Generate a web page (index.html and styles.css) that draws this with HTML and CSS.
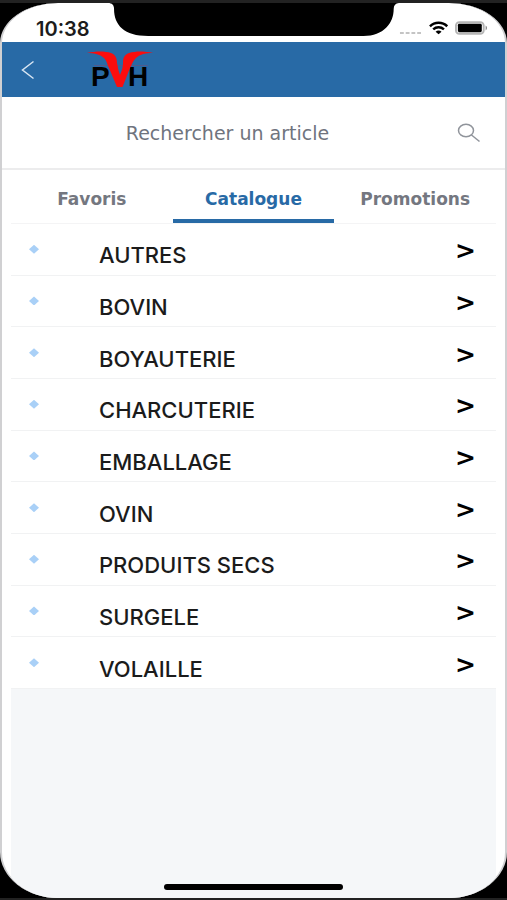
FILE: index.html
```html
<!DOCTYPE html>
<html lang="fr">
  <head>
    <meta charset="utf-8">
    <meta name="viewport" content="width=device-width, initial-scale=1">
    <title>Catalogue</title>
    <link rel="stylesheet" href="styles.css">
  </head>
  <body>
    <div class="screen">
      <!-- Status bar -->
      <div class="status-bar">
        <span class="time">10:38</span>
        <svg class="notch" viewBox="0 0 290 33" preserveAspectRatio="none" aria-hidden="true">
          <path d="M0 0C4 0 6 2 6 6C6 22 16 33 40 33H254C274 33 284 20 284 6C284 2 286 0 290 0Z"/>
        </svg>
        <div class="status-icons">
          <svg width="24" height="4" viewBox="0 0 24 4" aria-hidden="true">
            <path d="M1 2h4M7 2h4M13 2h4M19 2h4" stroke="#c4c4c4" stroke-width="2"/>
          </svg>
          <svg width="20" height="14" viewBox="0 0 20 14" fill="none" stroke="#000" stroke-width="2.6" aria-hidden="true">
            <path d="M1 5.2C6 .4 14 .4 19 5.2"/>
            <path d="M4.400 8.400C7.600 5.500 12.400 5.500 15.600 8.400"/>
            <path d="M10 13.400L6.900 10.900C8.700 9.300 11.300 9.300 13.100 10.900Z" fill="#000" stroke="none"/>
          </svg>
          <svg width="34" height="14" viewBox="0 0 34 14" aria-hidden="true">
            <rect x="1" y="1" width="29" height="12" rx="3.5" fill="#fff" stroke="#b5b5b5" stroke-width="2"/>
            <rect x="3" y="2.6" width="25" height="8.8" rx="1.5"/>
            <path d="M32 4.500C34 5.500 34 8.500 32 9.500Z" fill="#888"/>
          </svg>
        </div>
      </div>

      <!-- Header -->
      <header class="header">
        <button class="back-btn" type="button" aria-label="Retour">
          <svg width="14" height="20" viewBox="0 0 14 20" fill="none" stroke="#d7e5f2" stroke-width="1.5">
            <path d="M12.500 1.500L1.500 10L12.500 18.500"/>
          </svg>
        </button>
        <svg class="logo" width="70" height="54" viewBox="0 -7 70 54" role="img" aria-label="PVH">
          <path d="M8 15.500H62" stroke="#7b4a72" stroke-width="1" opacity=".5"/>
          <g class="logo-text">
            <text x="5" y="36">P</text>
            <text x="42" y="36">H</text>
          </g>
          <path fill="#fb0d0d" d="M1 3C10 1 19 1 25 3C30 5 31 9 31 13C32 17 32 20 34 25C36 20 37 17 37 13C37 8 38 5 43 3C50 1 58 1 67 3C60 3 54 4 50 8C46 12 46 15 44 18L36.500 37H31L23 18C21 14 21 11 18 8C14 4 7 3 1 3Z"/>
        </svg>
      </header>

      <!-- Search -->
      <form class="search">
        <input class="search-input" type="text" placeholder="Rechercher un article" aria-label="Rechercher un article">
        <button class="search-btn" type="submit" aria-label="Rechercher">
          <svg width="24" height="20" viewBox="0 0 24 20" fill="none" stroke="#90949b" stroke-width="1.5">
            <ellipse cx="9" cy="7.500" rx="7.500" ry="6.200"/>
            <path d="M14.500 12L22.500 18.500"/>
          </svg>
        </button>
      </form>

      <main class="content">
        <nav class="tabs">
          <a class="tab" href="#favoris">Favoris</a>
          <a class="tab active" href="#catalogue" aria-current="page">Catalogue</a>
          <a class="tab" href="#promotions">Promotions</a>
        </nav>

        <ul class="categories">
          <li><a class="category" href="#autres"><span class="dot"></span><span class="name">AUTRES</span><span class="arrow">&gt;</span></a></li>
          <li><a class="category" href="#bovin"><span class="dot"></span><span class="name">BOVIN</span><span class="arrow">&gt;</span></a></li>
          <li><a class="category" href="#boyauterie"><span class="dot"></span><span class="name">BOYAUTERIE</span><span class="arrow">&gt;</span></a></li>
          <li><a class="category" href="#charcuterie"><span class="dot"></span><span class="name">CHARCUTERIE</span><span class="arrow">&gt;</span></a></li>
          <li><a class="category" href="#emballage"><span class="dot"></span><span class="name">EMBALLAGE</span><span class="arrow">&gt;</span></a></li>
          <li><a class="category" href="#ovin"><span class="dot"></span><span class="name">OVIN</span><span class="arrow">&gt;</span></a></li>
          <li><a class="category" href="#produits-secs"><span class="dot"></span><span class="name">PRODUITS SECS</span><span class="arrow">&gt;</span></a></li>
          <li><a class="category" href="#surgele"><span class="dot"></span><span class="name">SURGELE</span><span class="arrow">&gt;</span></a></li>
          <li><a class="category" href="#volaille"><span class="dot"></span><span class="name">VOLAILLE</span><span class="arrow">&gt;</span></a></li>
        </ul>

        <div class="empty">
          <div class="home-bar"></div>
        </div>
      </main>
    </div>
  </body>
</html>
```

FILE: styles.css
```css
* {
  box-sizing: border-box;
}

body {
  margin: 0;
  min-height: 100vh;
  display: flex;
  flex-direction: column;
  background-color: #000;
  border-top: 3px solid #222;
  border-bottom: 2px solid #222;
  font-family: Inter, "Liberation Sans", sans-serif;
}

a {
  color: inherit;
  text-decoration: none;
}

button {
  padding: 0;
  border: none;
  background: none;
  cursor: pointer;
}

svg {
  display: block;
}

.screen {
  flex: 1;
  display: flex;
  flex-direction: column;
  overflow: hidden;
  background-color: #fff;
  border: solid #d0d0d2;
  border-width: 0 2px;
  border-radius: 58px 58px 58px 58px / 40px 40px 46px 46px;
}

/* Status bar */
.status-bar {
  display: grid;
  grid-template-columns: 21% 58% 21%;
  height: 39px;
}

.time {
  padding: 14px 0 0 34px;
  font-size: 20px;
  font-weight: 600;
  line-height: 24px;
  color: #1c1c1c;
}

.notch {
  width: 100%;
  height: 33px;
}

.status-icons {
  display: flex;
  justify-content: flex-end;
  align-items: flex-end;
  gap: 7px;
  height: 32px;
  padding-right: 17px;
}

/* Header */
.header {
  display: flex;
  align-items: center;
  height: 55px;
  background-color: #286aa6;
}

.back-btn {
  width: 52px;
  height: 55px;
  display: flex;
  justify-content: center;
  align-items: center;
}

.logo {
  margin-left: 32px;
}

.logo-text {
  font-family: "Liberation Sans", Arial, sans-serif;
  font-size: 28px;
  font-weight: bold;
}

/* Search */
.search {
  display: flex;
  align-items: center;
  height: 73px;
  padding: 0 24px 0 20px;
  border-bottom: 2px solid #ececed;
}

.search-input {
  flex: 1;
  min-width: 0;
  padding: 0 24px 0 0;
  border: none;
  outline: none;
  text-align: center;
  font-family: "DejaVu Sans", sans-serif;
  font-size: 19px;
  color: #6f747e;
}

.search-input::placeholder {
  color: #6f747e;
}

/* Content */
.content {
  flex: 1;
  display: flex;
  flex-direction: column;
  padding: 0 9px;
}

.tabs {
  display: grid;
  grid-template-columns: repeat(3, 1fr);
  height: 54px;
  border-bottom: 1px solid #f4f4f5;
}

.tab {
  display: flex;
  justify-content: center;
  align-items: center;
  padding-top: 8px;
  border-bottom: 4px solid transparent;
  font-family: "DejaVu Sans", sans-serif;
  font-size: 17px;
  font-weight: bold;
  color: #747780;
}

.tab.active {
  color: #286aa6;
  border-bottom-color: #286aa6;
}

.categories {
  display: grid;
  grid-auto-rows: 1fr;
  min-height: 465px;
  margin: 0;
  padding: 0;
  list-style: none;
}

.category {
  height: 100%;
  display: flex;
  align-items: center;
  padding: 0 20px 0 18px;
  border-bottom: 1px solid #f1f2f3;
}

.dot {
  width: 10px;
  height: 9px;
  background-color: #a9d0f7;
  clip-path: polygon(50% 0, 100% 50%, 50% 100%, 0 50%);
}

.name {
  flex: 1;
  padding: 12px 0 0 60px;
  font-size: 22px;
  font-weight: 500;
  line-height: 24px;
  color: #1b1b1b;
}

.arrow {
  padding-top: 4px;
  font-family: "DejaVu Sans", sans-serif;
  font-size: 25px;
  font-weight: bold;
  line-height: 28px;
  color: #000;
}

/* Empty space below the list */
.empty {
  flex: 1;
  display: flex;
  justify-content: center;
  align-items: flex-end;
  padding-bottom: 8px;
  background-color: #f5f7f9;
}

.home-bar {
  width: 37%;
  height: 6px;
  border-radius: 3px;
  background-color: #000;
}
```
